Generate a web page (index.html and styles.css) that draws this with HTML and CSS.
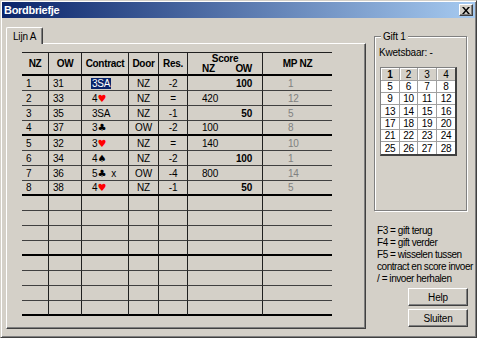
FILE: index.html
```html
<!DOCTYPE html>
<html lang="nl">
<head>
    <meta charset="UTF-8">
    <title>Bordbriefje</title>
    <link rel="stylesheet" href="styles.css">
</head>
<body>
    <div class="window">
        <!-- Title bar -->
        <div class="titlebar">
            <span class="title">Bordbriefje</span>
            <span class="close">
                <svg width="8" height="7" viewBox="0 0 8 7"><path d="M0 0h2l2 2.5 2-2.5h2l-3 3.5 3 3.5h-2l-2-2.5-2 2.5h-2l3-3.5z" fill="#000"/></svg>
            </span>
        </div>

        <div class="main">
            <!-- Tab control -->
            <div class="tabs">
                <div class="tab-strip">
                    <div class="tab">Lijn A</div>
                </div>
                <div class="tab-panel">
                    <table class="board">
                        <colgroup>
                            <col class="c-nz"><col class="c-ow"><col class="c-contract"><col class="c-door">
                            <col class="c-res"><col class="c-score"><col class="c-mp">
                        </colgroup>
                        <thead>
                            <tr>
                                <th>NZ</th>
                                <th>OW</th>
                                <th>Contract</th>
                                <th>Door</th>
                                <th>Res.</th>
                                <th class="score-head">
                                    <div>Score</div>
                                    <div class="split"><span>NZ</span><span>OW</span></div>
                                </th>
                                <th>MP NZ</th>
                            </tr>
                        </thead>
                        <tbody>
                            <tr><td>1</td><td>31</td><td class="contract"><span class="sel">3SA</span></td><td class="center">NZ</td><td class="center">-2</td><td><div class="split"><span></span><b>100</b></div></td><td class="mp">1</td></tr>
                            <tr><td>2</td><td>33</td><td class="contract">4<span class="suit red">&#9829;</span></td><td class="center">NZ</td><td class="center">=</td><td><div class="split"><span>420</span><b></b></div></td><td class="mp">12</td></tr>
                            <tr><td>3</td><td>35</td><td class="contract">3SA</td><td class="center">NZ</td><td class="center">-1</td><td><div class="split"><span></span><b>50</b></div></td><td class="mp">5</td></tr>
                            <tr><td>4</td><td>37</td><td class="contract">3<span class="suit">&#9827;</span></td><td class="center">OW</td><td class="center">-2</td><td><div class="split"><span>100</span><b></b></div></td><td class="mp">8</td></tr>
                            <tr><td>5</td><td>32</td><td class="contract">3<span class="suit red">&#9829;</span></td><td class="center">NZ</td><td class="center">=</td><td><div class="split"><span>140</span><b></b></div></td><td class="mp">10</td></tr>
                            <tr><td>6</td><td>34</td><td class="contract">4<span class="suit">&#9824;</span></td><td class="center">NZ</td><td class="center">-2</td><td><div class="split"><span></span><b>100</b></div></td><td class="mp">1</td></tr>
                            <tr><td>7</td><td>36</td><td class="contract">5<span class="suit">&#9827;</span>&nbsp; x</td><td class="center">OW</td><td class="center">-4</td><td><div class="split"><span>800</span><b></b></div></td><td class="mp">14</td></tr>
                            <tr><td>8</td><td>38</td><td class="contract">4<span class="suit red">&#9829;</span></td><td class="center">NZ</td><td class="center">-1</td><td><div class="split"><span></span><b>50</b></div></td><td class="mp">5</td></tr>
                            <tr><td></td><td></td><td></td><td></td><td></td><td></td><td></td></tr>
                            <tr><td></td><td></td><td></td><td></td><td></td><td></td><td></td></tr>
                            <tr><td></td><td></td><td></td><td></td><td></td><td></td><td></td></tr>
                            <tr><td></td><td></td><td></td><td></td><td></td><td></td><td></td></tr>
                            <tr><td></td><td></td><td></td><td></td><td></td><td></td><td></td></tr>
                            <tr><td></td><td></td><td></td><td></td><td></td><td></td><td></td></tr>
                            <tr><td></td><td></td><td></td><td></td><td></td><td></td><td></td></tr>
                            <tr><td></td><td></td><td></td><td></td><td></td><td></td><td></td></tr>
                        </tbody>
                    </table>
                </div>
            </div>

            <!-- Side panel -->
            <div class="side">
                <fieldset class="group">
                    <legend>Gift 1</legend>
                    <div class="vuln">Kwetsbaar: -</div>
                    <div class="boards">
                        <span class="top cur">1</span><span class="top">2</span><span class="top">3</span><span class="top">4</span>
                        <span>5</span><span>6</span><span>7</span><span>8</span>
                        <span>9</span><span>10</span><span>11</span><span>12</span>
                        <span>13</span><span>14</span><span>15</span><span>16</span>
                        <span>17</span><span>18</span><span>19</span><span>20</span>
                        <span>21</span><span>22</span><span>23</span><span>24</span>
                        <span>25</span><span>26</span><span>27</span><span>28</span>
                    </div>
                </fieldset>

                <div class="keys">
                    <div>F3 = gift terug</div>
                    <div>F4 = gift verder</div>
                    <div>F5 = wisselen tussen<br>contract en score invoer</div>
                    <div>/ = invoer herhalen</div>
                </div>

                <div class="buttons">
                    <button class="btn">Help</button>
                    <button class="btn">Sluiten</button>
                </div>
            </div>
        </div>
    </div>
</body>
</html>
```

FILE: styles.css
```css
/* General */
body {
    margin: 0;
    font-family: "Liberation Sans", Arial, sans-serif;
    font-size: 10px;
    letter-spacing: -0.2px;
    color: #000;
    background-color: #d4d0c8;
}

/* Window frame */
.window {
    width: 477px;
    height: 338px;
    box-sizing: border-box;
    padding: 1px;
    background-color: #d4d0c8;
    border: 1px solid;
    border-color: #d4d0c8 #404040 #404040 #d4d0c8;
    box-shadow: inset 1px 1px 0 #fff, inset -1px -1px 0 #808080;
}

.titlebar {
    height: 16px;
    display: flex;
    align-items: center;
    justify-content: space-between;
    padding: 0 2px 0 2px;
    background: linear-gradient(90deg, #0a246a, #a6caf0);
}

.title {
    color: #fff;
    font-weight: bold;
    font-size: 11px;
    letter-spacing: -0.3px;
}

.close {
    width: 14px;
    height: 12px;
    box-sizing: border-box;
    display: flex;
    align-items: center;
    justify-content: center;
    background-color: #d4d0c8;
    border: 1px solid;
    border-color: #fff #404040 #404040 #fff;
    box-shadow: inset -1px -1px 0 #808080;
}

.main {
    display: flex;
    gap: 8px;
    padding: 9px 0 0 4px;
}

/* Tab control */
.tabs {
    width: 360px;
}

.tab-strip {
    height: 16px;
    display: flex;
}

.tab {
    position: relative;
    z-index: 1;
    width: 37px;
    height: 17px;
    box-sizing: border-box;
    padding: 3px 0 0 6px;
    background-color: #d4d0c8;
    border: 1px solid;
    border-bottom: none;
    border-color: #fff #404040 #fff #fff;
    border-radius: 2px 2px 0 0;
    box-shadow: inset -1px 0 0 #808080;
}

.tab-panel {
    height: 286px;
    box-sizing: border-box;
    padding: 8px 0 0 15px;
    border: 1px solid;
    border-color: #fff #404040 #404040 #fff;
    box-shadow: inset -1px -1px 0 #808080;
}

/* Score table */
.board {
    width: 310px;
    table-layout: fixed;
    border-collapse: separate;
    border-spacing: 0;
}

.c-nz { width: 26px; }
.c-ow { width: 33px; }
.c-contract { width: 47px; }
.c-door { width: 30px; }
.c-res { width: 29px; }
.c-score { width: 75px; }
.c-mp { width: 70px; }

.board th,
.board td {
    padding: 0;
    box-sizing: border-box;
    white-space: nowrap;
    overflow: hidden;
}

.board th {
    height: 23px;
    font-weight: bold;
    text-align: center;
    letter-spacing: -0.3px;
    border-top: 1px solid #202020;
    border-bottom: 2px solid #000;
}

.board th + th,
.board td + td {
    border-left: 1px solid #202020;
}

.board td {
    height: 15px;
    line-height: 13px;
    padding-left: 4px;
    border-bottom: 1px solid #404040;
}

.board tbody tr:nth-child(4n) td {
    border-bottom: 2px solid #000;
}

.board td.contract {
    padding-left: 10px;
}

.board td.center {
    padding-left: 0;
    text-align: center;
}

.board td.mp {
    padding-left: 25px;
    color: #808080;
}

.board td:nth-child(6) {
    padding: 0 10px 0 14px;
}

.board th.score-head {
    vertical-align: top;
    padding-top: 1px;
    line-height: 10px;
}

.split {
    display: flex;
    justify-content: space-between;
}

.score-head .split {
    padding: 0 10px 0 14px;
}

.sel {
    background-color: #0a246a;
    color: #fff;
    padding: 0 1px;
    margin-left: -1px;
}

.suit {
    font-family: "DejaVu Sans", sans-serif;
    font-size: 10px;
}

.red {
    color: #ff0000;
}

/* Side panel */
.side {
    width: 94px;
    display: flex;
    flex-direction: column;
}

.group {
    margin: 3px 0 0;
    width: 93px;
    height: 181px;
    box-sizing: border-box;
    padding: 0 0 0 4px;
    border: 1px solid #808080;
    box-shadow: 1px 1px 0 #fff, inset 1px 1px 0 #fff;
}

.group legend {
    padding: 0 2px;
    margin-left: 2px;
    line-height: 13px;
    background-color: #d4d0c8;
}

.vuln {
    margin-top: 4px;
    line-height: 12px;
}

.boards {
    margin: 8px 0 0 1px;
    display: grid;
    grid-template-columns: 19px 18px 19px 18px;
    grid-template-rows: 13px 12px 12px 13px 12px 12px 12px;
    width: fit-content;
    border: 1px solid #808080;
    border-right: 2px solid #404040;
    border-bottom: 2px solid #404040;
}

.boards span {
    display: flex;
    align-items: center;
    justify-content: center;
    background-color: #fff;
    border-right: 1px solid #a0a0a0;
    border-bottom: 1px solid #a0a0a0;
}

.boards span:nth-child(4n) {
    border-right: none;
}

.boards span:nth-last-child(-n+4) {
    border-bottom: none;
}

.boards .top {
    background-color: #d4d0c8;
    box-shadow: inset 1px 1px 0 #fff;
}

.boards .cur {
    font-weight: bold;
}

.keys {
    margin-top: 14px;
    padding-left: 3px;
    line-height: 12px;
    letter-spacing: -0.45px;
    white-space: nowrap;
}

.buttons {
    margin-top: 3px;
    display: flex;
    flex-direction: column;
    align-items: flex-end;
    gap: 3px;
}

.btn {
    width: 60px;
    height: 18px;
    padding: 0;
    font-family: inherit;
    font-size: 10px;
    letter-spacing: -0.2px;
    color: #000;
    background-color: #d4d0c8;
    border: 1px solid;
    border-color: #fff #404040 #404040 #fff;
    border-radius: 0;
    box-shadow: inset -1px -1px 0 #808080;
}
```
